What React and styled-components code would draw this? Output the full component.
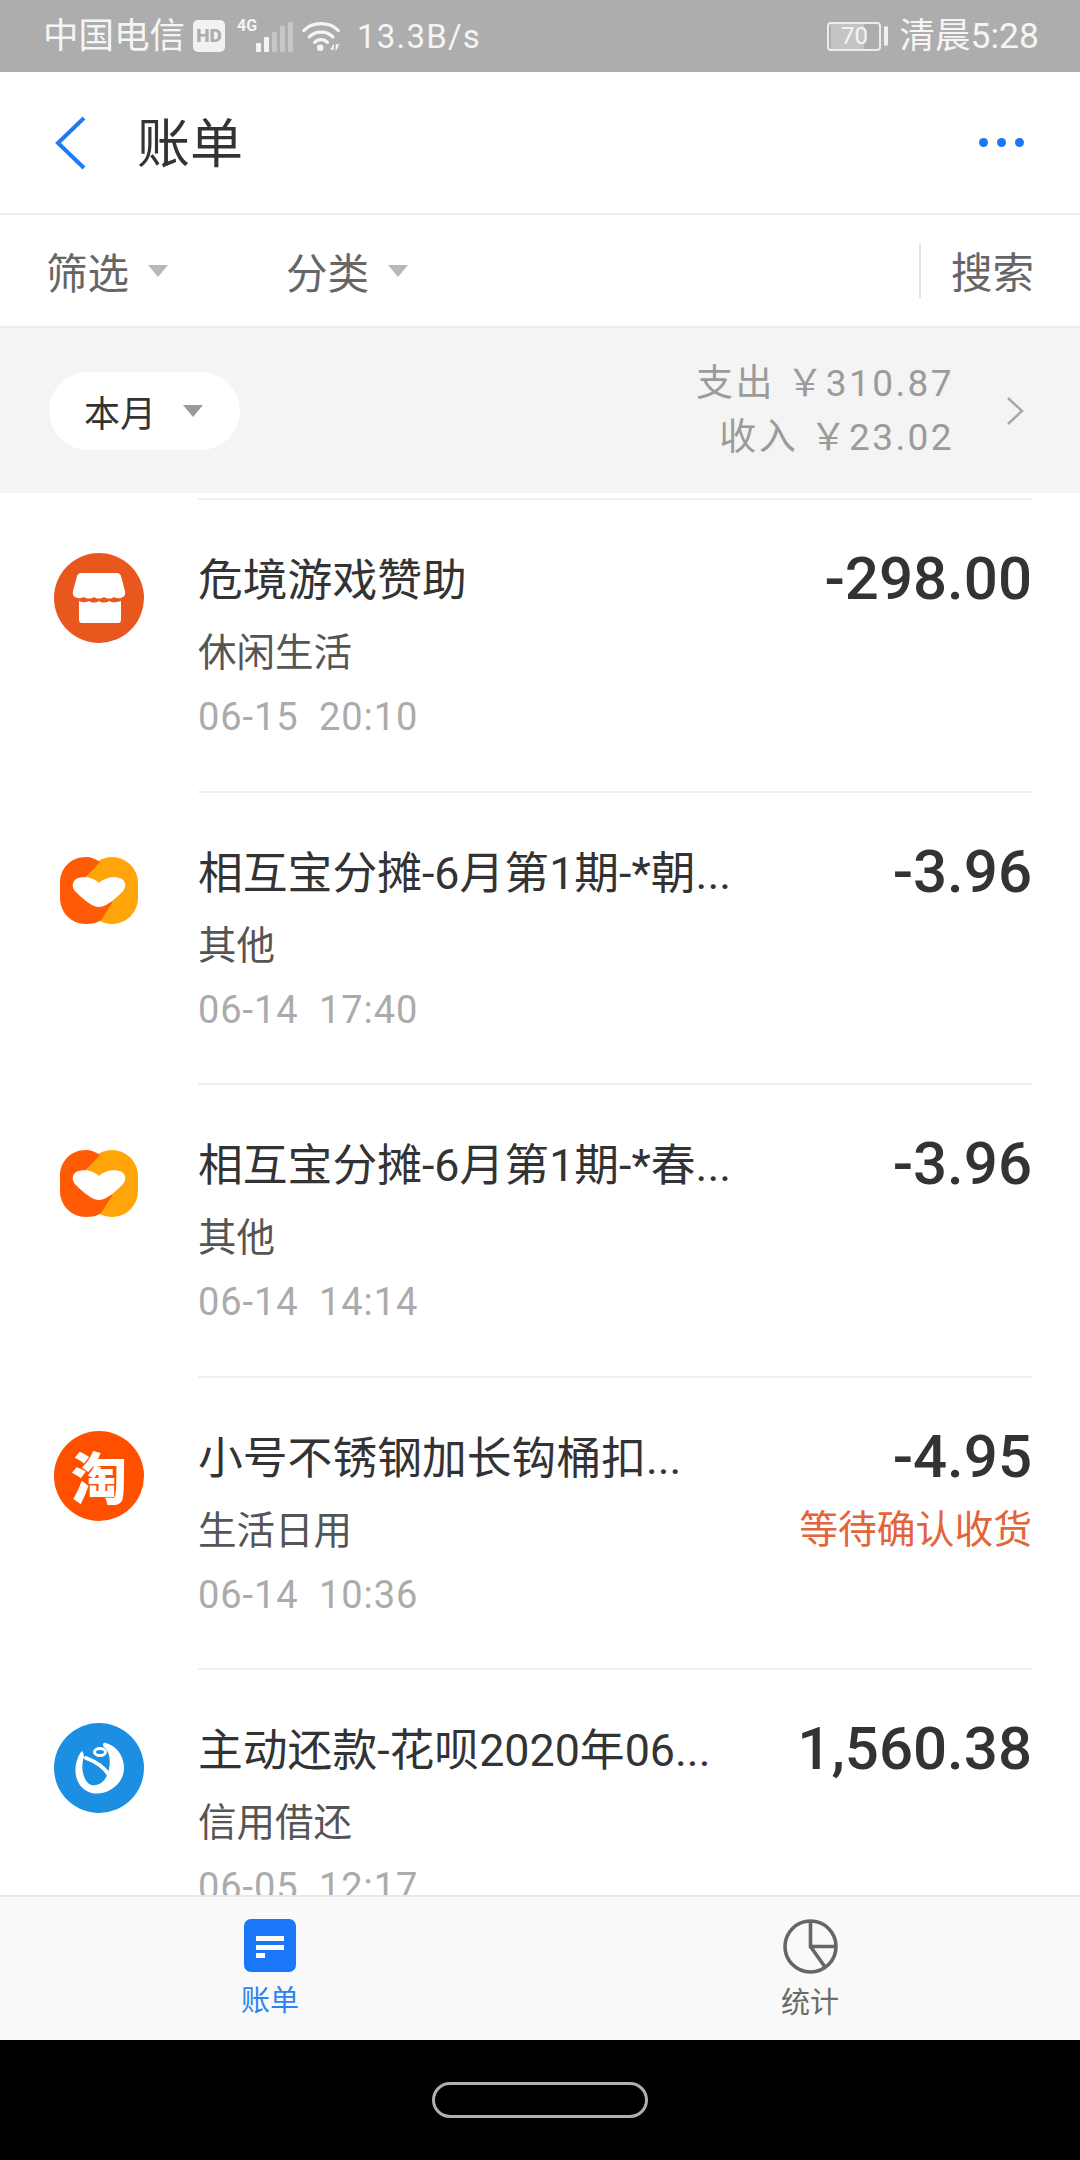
import React from 'react'
import styled, { createGlobalStyle } from 'styled-components'

const Global = createGlobalStyle`
  html, body { margin: 0; padding: 0; background: #fff; }
  body { font-family: Roboto, "Noto Sans CJK SC", sans-serif; }
`

const Page = styled.div`
  width: 1080px;
  height: 2160px;
  display: flex;
  flex-direction: column;
  overflow: hidden;
`

const StatusBar = styled.div`
  height: 72px;
  flex: none;
  background: #adadad;
  color: #f5f5f5;
  display: flex;
  align-items: center;
  padding: 0 41px 0 43px;
  box-sizing: border-box;
`
const Carrier = styled.span`
  font-size: 35.5px;
  line-height: 72px;
  margin-right: 8px;
`
const HdBadge = styled.span`
  width: 32px;
  height: 32px;
  border-radius: 5px;
  background: #f2f2f2;
  color: #adadad;
  font-size: 19px;
  font-weight: 900;
  text-align: center;
  line-height: 32px;
  margin-right: 12px;
`
const Network = styled.span`
  font-size: 16px;
  font-weight: 700;
  align-self: flex-start;
  margin: 17px 0 0 0;
  line-height: 18px;
  width: 19px;
`
const Bars = styled.div`
  display: flex;
  align-items: flex-end;
  gap: 3px;
  height: 34px;
  margin: 18px 9px 0 0;
  padding-top: 4px;
  box-sizing: border-box;
  align-self: flex-start;
`
const Bar = styled.i`
  display: block;
  width: 5px;
  height: ${p => p.$h}px;
  background: ${p => (p.$on ? '#f5f5f5' : '#c6c6c6')};
  border-radius: 1px;
`
const Speed = styled.span`
  font-size: 33px;
  margin-left: 15px;
  letter-spacing: 1.2px;
`
const StatusRight = styled.div`
  margin-left: auto;
  display: flex;
  align-items: center;
`
const Battery = styled.div`
  width: 54px;
  height: 29px;
  border: 2px solid #ececec;
  border-radius: 4px;
  box-sizing: border-box;
  font-size: 24px;
  line-height: 25px;
  text-align: center;
  padding-left: 2px;
  background: linear-gradient(to right, #c4c4c4 70%, transparent 70%);
  background-clip: content-box;
`
const BatteryNub = styled.i`
  display: block;
  width: 4px;
  height: 20px;
  border-radius: 2px;
  background: #f0f0f0;
  margin: 0 12px 0 3px;
`
const Clock = styled.span`
  font-size: 35.5px;
  line-height: 72px;
`

const Header = styled.div`
  height: 143px;
  flex: none;
  background: #fff;
  border-bottom: 2px solid #eeeeee;
  box-sizing: border-box;
  display: flex;
  align-items: center;
  padding: 0 56px 0 54px;
`
const HeaderTitle = styled.h1`
  margin: 5px 0 0 49px;
  font-size: 53px;
  font-weight: 400;
  color: #333;
  line-height: 1;
`
const Dots = styled.div`
  margin-left: auto;
  display: flex;
  gap: 9px;
`
const Dot = styled.i`
  display: block;
  width: 9px;
  height: 9px;
  border-radius: 50%;
  background: #1a77f7;
`

const FilterBar = styled.div`
  height: 113px;
  flex: none;
  box-sizing: border-box;
  background: #fff;
  border-bottom: 2px solid #ebebeb;
  display: flex;
  align-items: center;
  padding: 0 46px;
  color: #666;
  font-size: 41.500px;
`
const FilterItem = styled.div`
  display: flex;
  align-items: center;
  width: 240px;
  gap: 19px;
`
const Triangle = styled.i`
  display: block;
  width: 0;
  height: 0;
  border-left: 10px solid transparent;
  border-right: 10px solid transparent;
  border-top: 12px solid ${p => p.$color || '#b8b8b8'};
`
const SearchLink = styled.div`
  margin-left: auto;
  height: 54px;
  line-height: 60px;
  border-left: 2px solid #e4e4e4;
  padding-left: 30px;
`

const SummaryBar = styled.div`
  height: 165px;
  flex: none;
  background: #f4f4f4;
  display: flex;
  align-items: center;
  box-sizing: border-box;
  padding: 0 56px 0 49px;
`
const MonthPill = styled.div`
  width: 191px;
  height: 78px;
  border-radius: 39px;
  background: #fff;
  box-sizing: border-box;
  display: flex;
  align-items: center;
  padding-left: 35px;
  gap: 27px;
  font-size: 36px;
  color: #333;
`
const Totals = styled.div`
  margin-left: auto;
  margin-right: 52px;
  text-align: right;
  font-size: 37px;
  line-height: 54px;
  color: #9b9b9b;
  letter-spacing: 2.4px;
  white-space: pre;
`

const List = styled.div`
  flex: 1;
  min-height: 0;
  overflow: hidden;
  background: #fff;
  padding-top: 5px;
`
const Row = styled.div`
  height: 292.6px;
  display: flex;
  padding: 0 48px 0 54px;
`
const LogoWrap = styled.div`
  width: 90px;
  height: 90px;
  margin: 55px 54px 0 0;
  flex: none;
  position: relative;
  display: flex;
  align-items: center;
  justify-content: center;
`
const TaoLogo = styled.div`
  width: 90px;
  height: 90px;
  border-radius: 50%;
  background: #ff5000;
  color: #fff;
  font-family: "Noto Sans CJK SC", sans-serif;
  font-size: 56px;
  font-weight: 900;
  line-height: 88px;
  text-align: center;
`
const RowBody = styled.div`
  flex: 1;
  border-top: 2px solid #efefef;
  display: flex;
  justify-content: space-between;
`
const Info = styled.div`
  padding-top: 51px;
`
const Title = styled.div`
  font-size: 44.800px;
  line-height: 60px;
  color: #333;
  white-space: nowrap;
`
const Category = styled.div`
  font-size: 38.500px;
  line-height: 83px;
  color: #555;
`
const When = styled.div`
  font-size: 38px;
  line-height: 46px;
  color: #ababab;
  white-space: pre;
  letter-spacing: 0.9px;
`
const Side = styled.div`
  text-align: right;
  padding-top: 44px;
`
const Amount = styled.div`
  font-size: 60px;
  line-height: 70px;
  font-weight: 500;
  color: #333;
`
const Pending = styled.div`
  font-size: 38.800px;
  line-height: 46px;
  margin-top: 15px;
  color: #e3643a;
`

const TabBar = styled.div`
  height: 145px;
  flex: none;
  background: #f9f9f9;
  border-top: 2px solid #e8e8e8;
  box-sizing: border-box;
  display: flex;
`
const Tab = styled.div`
  flex: 1;
  display: flex;
  flex-direction: column;
  align-items: center;
  padding-top: 22px;
  font-size: 29px;
  line-height: 40px;
  color: ${p => (p.$active ? '#2f83f0' : '#6b6b6b')};
  svg { margin-bottom: 9px; display: block; }
`
const NavBar = styled.div`
  height: 120px;
  flex: none;
  background: #000;
  display: flex;
  align-items: center;
  justify-content: center;
`
const HomePill = styled.div`
  width: 216px;
  height: 36px;
  border: 3px solid #b0b0b0;
  border-radius: 18px;
  box-sizing: border-box;
`

const WifiIcon = () => (
  <svg width="40" height="34" viewBox="0 0 44 36" fill="none">
    <path d="M2 12 C12 2 30 2 40 12" stroke="#f5f5f5" strokeWidth="3.6" strokeLinecap="round" />
    <path d="M8 19 C15 12 27 12 34 19" stroke="#f5f5f5" strokeWidth="3.6" strokeLinecap="round" />
    <path d="M14 25 C18 21 24 21 28 25" stroke="#f5f5f5" strokeWidth="3.6" strokeLinecap="round" />
    <circle cx="20" cy="31" r="3.6" fill="#f5f5f5" />
    <path d="M31 33 L35 26 V33Z M37 27 L41 27 L37 35Z" fill="#f5f5f5" />
  </svg>
)

const BackIcon = () => (
  <svg width="34" height="56" viewBox="0 0 34 56" fill="none">
    <path d="M30 3 L4 28 L30 53" stroke="#1f7bf2" strokeWidth="4" />
  </svg>
)

const ChevronIcon = () => (
  <svg width="18" height="30" viewBox="0 0 18 30" fill="none">
    <path d="M2 2 L16 15 L2 28" stroke="#a6a6a6" strokeWidth="2.4" />
  </svg>
)

const StoreLogo = () => (
  <svg width="90" height="90" viewBox="0 0 90 90">
    <circle cx="45" cy="45" r="45" fill="#e8571e" />
    <path d="M27 20 H63 C65 20 66 21 67 23 L71 38 C71.500 41 71 43 69 44 C66 46 63 45.500 60 44 C57 46 53 46 50 44 C47 46 43 46 40 44 C37 46 33 46 30 44 C27 45.500 24 46 21 44 C19 43 18.500 41 19 38 L23 23 C24 21 25 20 27 20Z" fill="#fff" />
    <path d="M25 48 C28 49.500 31 50 35 48 C38 50 42 50 45 48 C48 50 52 50 55 48 C58 50 62 49.500 67 48 V67 C67 69 66 70 64 70 H28 C26 70 25 69 25 67Z" fill="#fff" />
  </svg>
)

const MutualLogo = () => (
  <svg width="78" height="67" viewBox="0 0 78 67">
    <rect x="26" y="0" width="52" height="67" rx="26" fill="#ffa50a" />
    <path d="M26 0 C31 0 36 2 40 5 L24 22 L52 46 L41 63 C37 66 32 67 26 67 C11 67 0 55 0 41 V26 C0 11 11 0 26 0Z" fill="#ff5a05" />
    <path d="M39 26 C33 20 22 19 16 22 C11 26 12 32 17 36 C25 44 33 50 39 50 C45 50 53 44 61 36 C66 32 67 26 62 22 C56 19 45 20 39 26Z" fill="#fff" />
  </svg>
)

const HuabeiLogo = () => (
  <svg width="90" height="90" viewBox="0 0 90 90" fill="none">
    <circle cx="45" cy="45" r="45" fill="#1c8fe3" />
    <path d="M27 29 C19 40 19 59 31 67 C45 77 70 65 70 45 C70 32 62 23 52 20 C49 19 48 22 50 24 C55 28 57 36 55 46 C53 60 40 66 34 60 C28 54 27 42 30 34 C30 30 28 27 27 29Z" fill="#fff" />
    <path d="M32 35 C40 38 50 44 55 52" stroke="#fff" strokeWidth="4" strokeLinecap="round" />
    <ellipse cx="46" cy="29" rx="5.500" ry="3.500" stroke="#fff" strokeWidth="3" />
  </svg>
)

const BillTabIcon = () => (
  <svg width="52" height="53" viewBox="0 0 52 53">
    <rect width="52" height="53" rx="7" fill="#1a77f7" />
    <path d="M12 17 H40 V22 H12Z M12 26 H40 V31 H12Z M12 34 H21 V39 H12Z" fill="#fff" />
  </svg>
)

const StatsTabIcon = () => (
  <svg width="55" height="55" viewBox="0 0 55 55" fill="none">
    <circle cx="27.500" cy="27.500" r="25.500" stroke="#666" strokeWidth="3.6" />
    <path d="M27.500 2 V27.500 H53 M27.500 27.500 L42 48" stroke="#666" strokeWidth="3.6" />
  </svg>
)

const rows = [
  { logo: <StoreLogo />, title: '危境游戏赞助', category: '休闲生活', when: '06-15  20:10', amount: '-298.00' },
  { logo: <MutualLogo />, title: '相互宝分摊-6月第1期-*朝...', category: '其他', when: '06-14  17:40', amount: '-3.96' },
  { logo: <MutualLogo />, title: '相互宝分摊-6月第1期-*春...', category: '其他', when: '06-14  14:14', amount: '-3.96' },
  { logo: <TaoLogo>淘</TaoLogo>, title: '小号不锈钢加长钩桶扣...', category: '生活日用', when: '06-14  10:36', amount: '-4.95', note: '等待确认收货' },
  { logo: <HuabeiLogo />, title: '主动还款-花呗2020年06...', category: '信用借还', when: '06-05  12:17', amount: '1,560.38' },
]

const App = () => (
  <Page>
    <Global />
    <StatusBar>
      <Carrier>中国电信</Carrier>
      <HdBadge>HD</HdBadge>
      <Network>4G</Network>
      <Bars>
        <Bar $on $h={9} />
        <Bar $on $h={15} />
        <Bar $h={20} />
        <Bar $h={26} />
        <Bar $h={30} />
      </Bars>
      <WifiIcon />
      <Speed>13.3B/s</Speed>
      <StatusRight>
        <Battery>70</Battery>
        <BatteryNub />
        <Clock>清晨5:28</Clock>
      </StatusRight>
    </StatusBar>
    <Header>
      <BackIcon />
      <HeaderTitle>账单</HeaderTitle>
      <Dots>
        <Dot />
        <Dot />
        <Dot />
      </Dots>
    </Header>
    <FilterBar>
      <FilterItem>筛选<Triangle /></FilterItem>
      <FilterItem>分类<Triangle /></FilterItem>
      <SearchLink>搜索</SearchLink>
    </FilterBar>
    <SummaryBar>
      <MonthPill>本月<Triangle $color="#9a9a9a" /></MonthPill>
      <Totals>
        <div>支出 ￥310.87</div>
        <div>收入 ￥23.02</div>
      </Totals>
      <ChevronIcon />
    </SummaryBar>
    <List>
      {rows.map(row => (
        <Row key={row.when}>
          <LogoWrap>{row.logo}</LogoWrap>
          <RowBody>
            <Info>
              <Title>{row.title}</Title>
              <Category>{row.category}</Category>
              <When>{row.when}</When>
            </Info>
            <Side>
              <Amount>{row.amount}</Amount>
              {row.note && <Pending>{row.note}</Pending>}
            </Side>
          </RowBody>
        </Row>
      ))}
    </List>
    <TabBar>
      <Tab $active>
        <BillTabIcon />
        账单
      </Tab>
      <Tab>
        <StatsTabIcon />
        统计
      </Tab>
    </TabBar>
    <NavBar>
      <HomePill />
    </NavBar>
  </Page>
)

export default App
